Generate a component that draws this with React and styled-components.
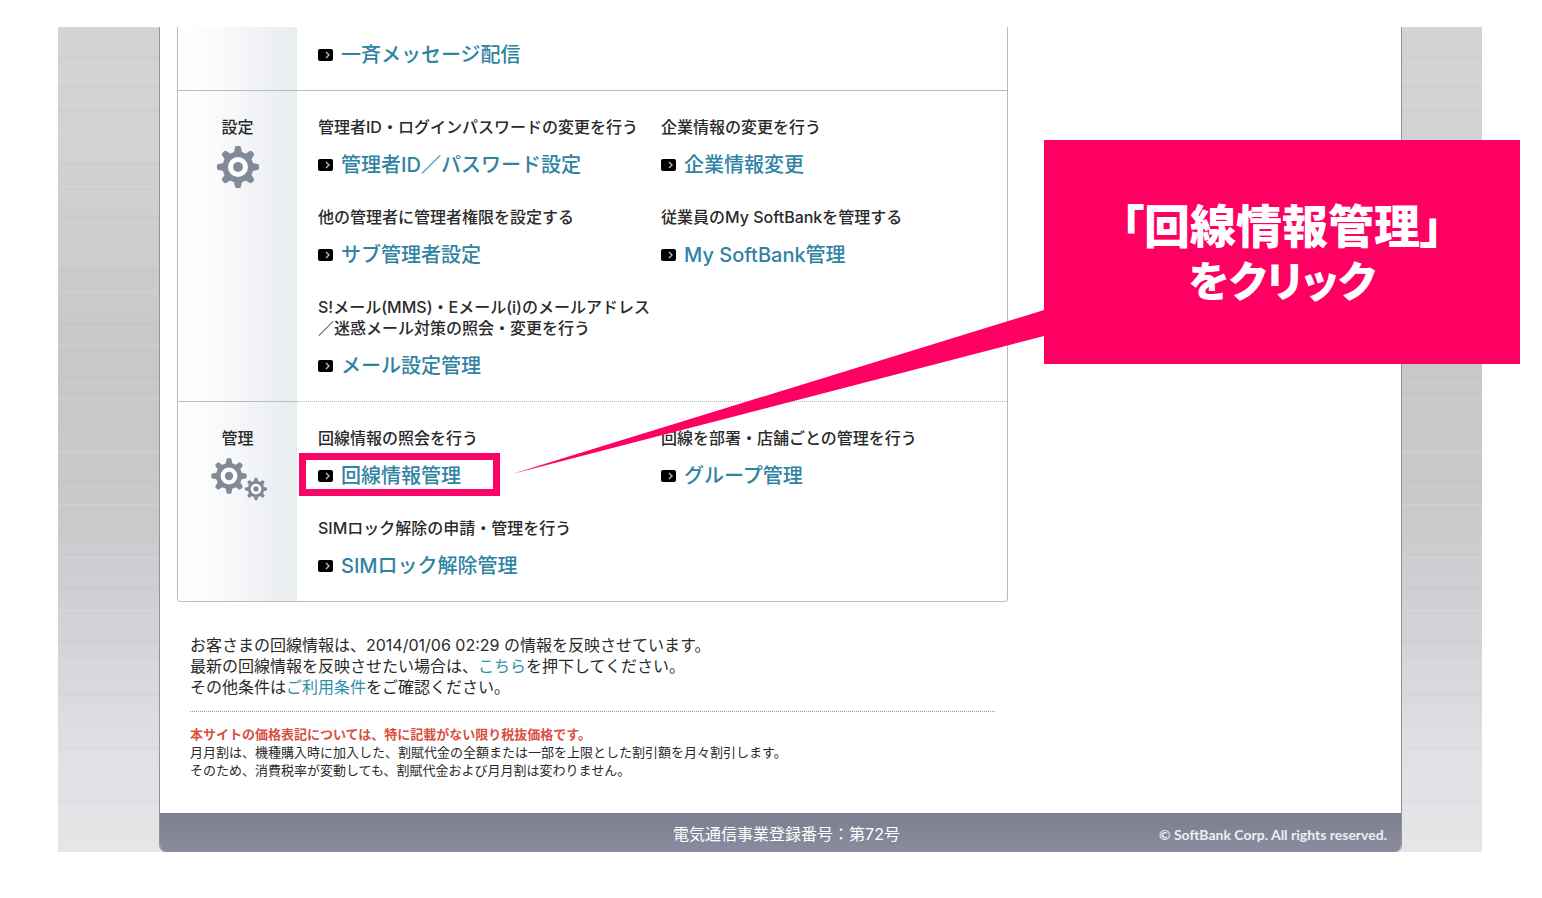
import React from "react";
import styled, { createGlobalStyle } from "styled-components";

const GlobalStyle = createGlobalStyle`
    * {
        box-sizing: border-box;
    }
    body {
        margin: 0;
        background: #fff;
        color: #2a2a2a;
        font-family: Inter, "Noto Sans CJK JP", sans-serif;
        font-size: 16px;
        line-height: 21px;
    }
    p, h2, h3 {
        margin: 0;
    }
`;

const Stage = styled.div`
    position: relative;
    padding: 27px 60px 46px 58px;
`;

const Steel = styled.div`
    padding: 0 80px 0 101px;
    background:
        repeating-linear-gradient(180deg, rgba(255, 255, 255, 0.12) 0 1px, transparent 2px 29px, rgba(110, 110, 125, 0.04) 31px 32px, transparent 34px 53px),
        linear-gradient(180deg, #d3d3d5 0%, #d2d2d5 15%, #c8c8cb 38%, #c9c9cc 58%, #d3d3d7 73%, #e0e0e4 88%, #e6e6e9 100%);
`;

const Paper = styled.div`
    background: #fff;
    border: solid #939398;
    border-width: 0 1px;
    border-radius: 0 0 7px 7px;
    overflow: hidden;
`;

const Main = styled.main`
    max-width: 848px;
    padding: 0 0 34px 17px;
`;

const Panel = styled.div`
    border: 1px solid #b9bcbf;
    border-top: 0;
    border-radius: 0 0 4px 4px;
    overflow: hidden;
`;

const Section = styled.section`
    display: flex;
`;

const Side = styled.div`
    flex: 0 0 119px;
    display: flex;
    flex-direction: column;
    align-items: center;
    gap: 8px;
    padding-top: 26px;
    background: linear-gradient(90deg, #fff 0%, #fbfbfc 30%, #f3f4f7 60%, #e8edf0 100%);
    border-bottom: ${({ $last }) => ($last ? "0" : "1px solid #b9bcbf")};
    h2 {
        font-size: 16px;
        line-height: 21px;
        font-weight: 500;
    }
`;

const Menu = styled.div`
    flex: 1;
    display: grid;
    grid-template-columns: 343px 1fr;
    row-gap: 28px;
    padding: ${({ $cut }) => ($cut ? "14px" : "26px")} 0 21px 21px;
    border-bottom: ${({ $line }) => ($line ? `1px ${$line} #b9bcbf` : "0")};
`;

const Item = styled.div`
    h3 {
        margin-bottom: 13px;
        font-size: 16px;
        line-height: 21px;
        font-weight: 500;
        white-space: nowrap;
    }
`;

const MenuLink = styled.a`
    position: relative;
    display: inline-flex;
    align-items: center;
    gap: 8px;
    color: #2f83a3;
    font-size: 20px;
    line-height: 28px;
    font-weight: 500;
    text-decoration: none;
    white-space: nowrap;
    vertical-align: top;
    &:hover {
        text-decoration: underline;
    }
`;

const Highlight = styled.span`
    position: absolute;
    top: -9px;
    left: -19px;
    width: 201px;
    height: 43px;
    border: 7px solid #fa0567;
    pointer-events: none;
`;

const Notes = styled.div`
    padding: 33px 13px 0;
`;

const TextLink = styled.a`
    color: #2f8fa8;
    text-decoration: none;
`;

const Tax = styled.div`
    margin-top: 13px;
    padding-top: 13px;
    border-top: 1px dotted #999;
    font-size: 13px;
    line-height: 18px;
    strong {
        color: #d9503f;
    }
`;

const Footer = styled.footer`
    display: grid;
    grid-template-columns: 1fr auto 1fr;
    align-items: center;
    height: 39px;
    padding: 4px 14px 0 26px;
    background: linear-gradient(180deg, #7c7f90, #8a8c9d);
    color: #fff;
    small {
        grid-column: 3;
        grid-row: 1;
        justify-self: end;
        font-family: Lato, sans-serif;
        font-size: 14px;
        line-height: 18px;
        font-weight: 700;
        color: #eeeef2;
    }
    p {
        grid-column: 2;
    }
`;

const Callout = styled.aside`
    position: absolute;
    top: 140px;
    right: 22px;
    width: 476px;
    height: 224px;
    padding-top: 5px;
    display: flex;
    flex-direction: column;
    align-items: center;
    justify-content: center;
    background: #ff0062;
    color: #fff;
    font-family: "Liberation Sans", "Noto Sans CJK JP", sans-serif;
    font-weight: 900;
    font-feature-settings: "palt";
    line-height: 56px;
`;

const CalloutName = styled.p`
    font-size: 46px;
`;

const CalloutAction = styled.p`
    font-size: 42px;
`;

const Tail = styled.svg`
    position: absolute;
    top: 170px;
    right: 100%;
    pointer-events: none;
`;

const TEETH = [0, 45, 90, 135, 180, 225, 270, 315];

function Gear({ x, y, scale = 1 }) {
    return (
        <g transform={`translate(${x} ${y}) scale(${scale})`} fill="#808b97">
            {TEETH.map((a) => (
                <path key={a} d="M-4.6 -12 L-3 -19.5 Q-2.7 -21 -1.4 -21 H1.4 Q2.7 -21 3 -19.5 L4.6 -12 Z" transform={`rotate(${a})`} />
            ))}
            <circle r="15.5" />
            <circle r="10" fill="#fff" />
            <circle r="5" />
        </g>
    );
}

function SettingIcon() {
    return (
        <svg width="44" height="44" viewBox="0 0 44 44" aria-hidden="true">
            <Gear x={22} y={21} />
        </svg>
    );
}

function ManageIcon() {
    return (
        <svg width="58" height="44" viewBox="0 0 58 44" aria-hidden="true">
            <Gear x={20} y={19} scale={0.84} />
            <Gear x={47} y={32} scale={0.53} />
        </svg>
    );
}

function Arrow() {
    return (
        <svg width="15" height="12" viewBox="0 0 15 12" aria-hidden="true">
            <rect width="15" height="12" rx="2" fill="#000" />
            <path d="M8 3 L11 6 L8 9" fill="none" stroke="#bbb" strokeWidth="1.4" />
        </svg>
    );
}

function Entry({ title, label, marked }) {
    return (
        <Item>
            {title && <h3>{title}</h3>}
            <MenuLink href="#">
                <Arrow />
                {label}
                {marked && <Highlight />}
            </MenuLink>
        </Item>
    );
}

function App() {
    return (
        <Stage>
            <GlobalStyle />
            <Steel>
                <Paper>
                    <Main>
                        <Panel>
                            <Section>
                                <Side />
                                <Menu $cut $line="solid">
                                    <Entry label="一斉メッセージ配信" />
                                </Menu>
                            </Section>
                            <Section>
                                <Side>
                                    <h2>設定</h2>
                                    <SettingIcon />
                                </Side>
                                <Menu $line="dotted">
                                    <Entry title="管理者ID・ログインパスワードの変更を行う" label="管理者ID／パスワード設定" />
                                    <Entry title="企業情報の変更を行う" label="企業情報変更" />
                                    <Entry title="他の管理者に管理者権限を設定する" label="サブ管理者設定" />
                                    <Entry title="従業員のMy SoftBankを管理する" label="My SoftBank管理" />
                                    <Entry
                                        title={<>S!メール(MMS)・Eメール(i)のメールアドレス<br />／迷惑メール対策の照会・変更を行う</>}
                                        label="メール設定管理"
                                    />
                                </Menu>
                            </Section>
                            <Section>
                                <Side $last>
                                    <h2>管理</h2>
                                    <ManageIcon />
                                </Side>
                                <Menu>
                                    <Entry title="回線情報の照会を行う" label="回線情報管理" marked />
                                    <Entry title="回線を部署・店舗ごとの管理を行う" label="グループ管理" />
                                    <Entry title="SIMロック解除の申請・管理を行う" label="SIMロック解除管理" />
                                </Menu>
                            </Section>
                        </Panel>
                        <Notes>
                            <p>お客さまの回線情報は、2014/01/06 02:29 の情報を反映させています。</p>
                            <p>最新の回線情報を反映させたい場合は、<TextLink href="#">こちら</TextLink>を押下してください。</p>
                            <p>その他条件は<TextLink href="#">ご利用条件</TextLink>をご確認ください。</p>
                            <Tax>
                                <p><strong>本サイトの価格表記については、特に記載がない限り税抜価格です。</strong></p>
                                <p>月月割は、機種購入時に加入した、割賦代金の全額または一部を上限とした割引額を月々割引します。</p>
                                <p>そのため、消費税率が変動しても、割賦代金および月月割は変わりません。</p>
                            </Tax>
                        </Notes>
                    </Main>
                    <Footer>
                        <p>電気通信事業登録番号：第72号</p>
                        <small>© SoftBank Corp. All rights reserved.</small>
                    </Footer>
                </Paper>
            </Steel>
            <Callout>
                <Tail width="532" height="166" viewBox="0 0 532 166" aria-hidden="true">
                    <path d="M532 0 L0 164 L532 26 Z" fill="#ff0062" />
                </Tail>
                <CalloutName>「回線情報管理」</CalloutName>
                <CalloutAction>をクリック</CalloutAction>
            </Callout>
        </Stage>
    );
}

export default App;
